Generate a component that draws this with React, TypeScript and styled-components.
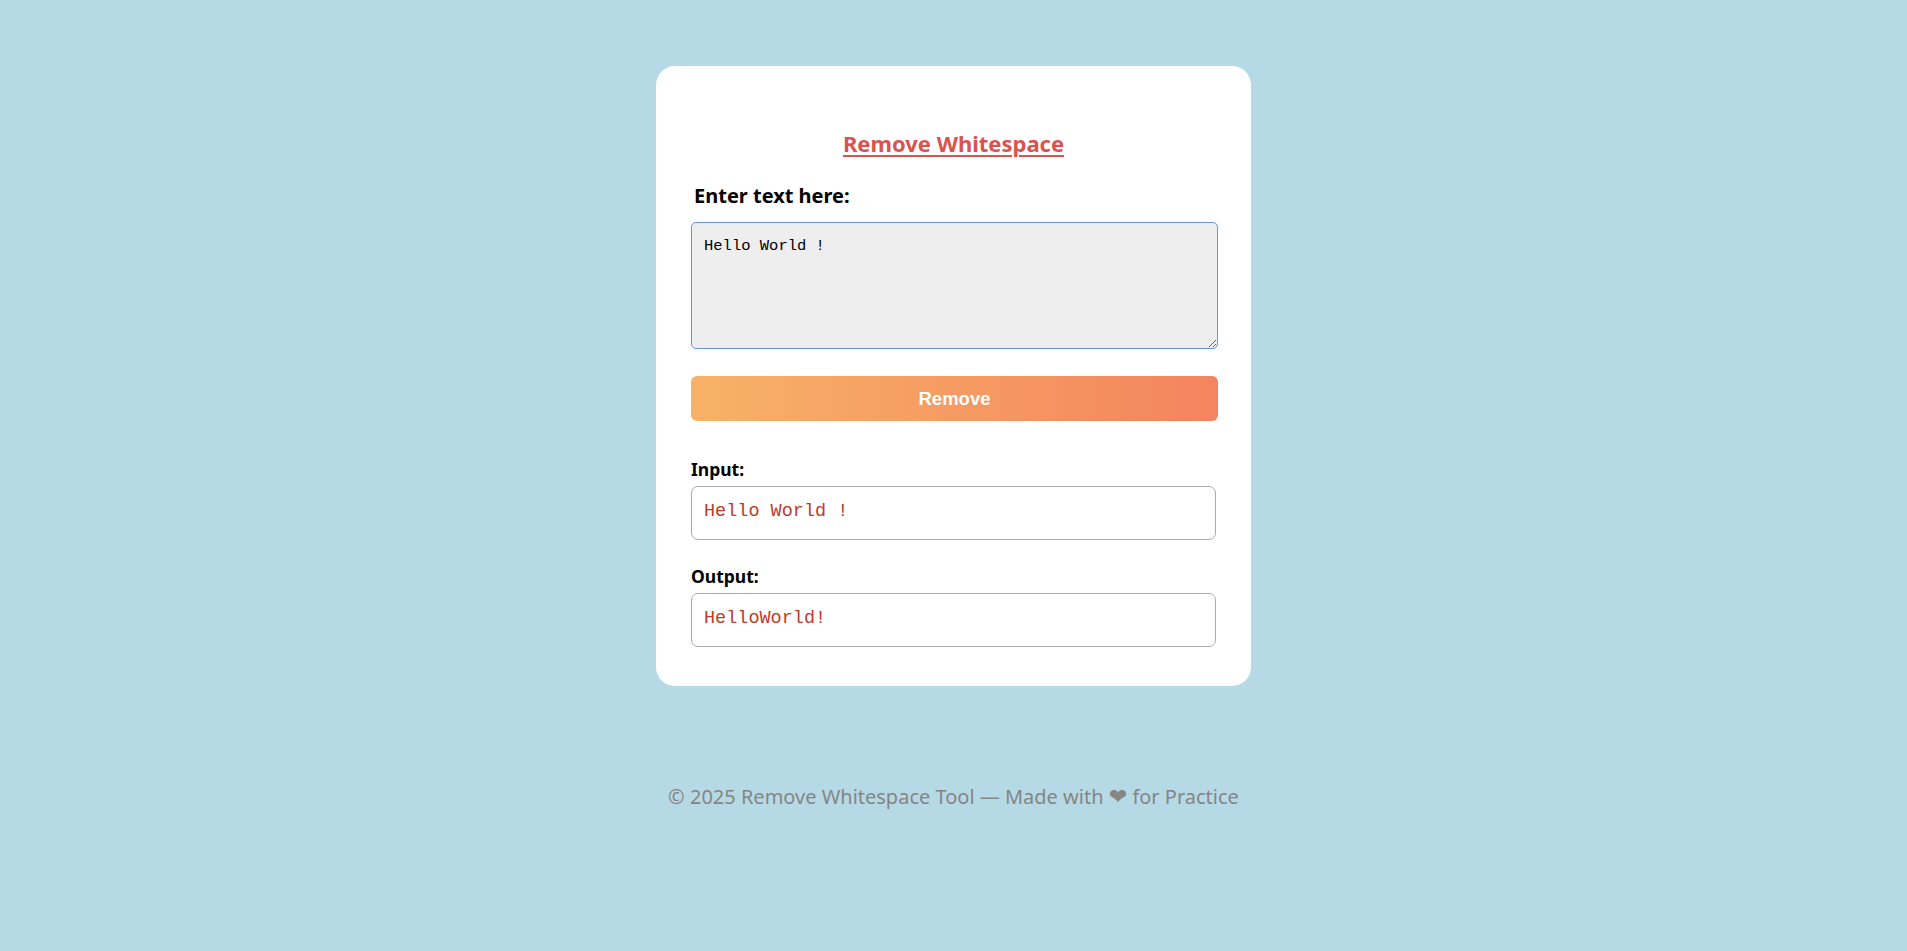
import { useState } from 'react';
import styled, { createGlobalStyle } from 'styled-components';

const GlobalStyle = createGlobalStyle`
  html, body {
    margin: 0;
    padding: 0;
    background: #b6dae5;
  }
  body {
    font-family: 'Noto Sans', 'Open Sans', sans-serif;
  }
`;

const Page = styled.div`
  min-height: 951px;
  padding-top: 66px;
  box-sizing: border-box;
`;

const Card = styled.main`
  width: 595px;
  margin: 0 auto;
  box-sizing: border-box;
  background: #fff;
  border-radius: 19px;
  padding: 62px 35px 39px;
`;

const Title = styled.h1`
  margin: 0 0 25px;
  text-align: center;
  font-size: 22px;
  line-height: 30px;
  font-weight: 700;
  color: #d9534f;
  text-decoration: underline;
  text-decoration-thickness: 2px;
  text-underline-offset: 3px;
`;

const Label = styled.label<{ $size?: number; $indent?: number }>`
  display: block;
  padding-left: ${({ $indent }) => $indent ?? 0}px;
  font-size: ${({ $size }) => $size ?? 17.5}px;
  line-height: ${({ $size }) => ($size ? $size + 5 : 22)}px;
  font-weight: 700;
  color: #000;
`;

const TextArea = styled.textarea`
  display: block;
  width: calc(100% + 2px);
  height: 127px;
  margin-top: 14px;
  box-sizing: border-box;
  padding: 14px 12px;
  border: 1px solid #6b95d8;
  border-radius: 5px;
  background: #eeeeee;
  font-family: 'Liberation Mono', monospace;
  font-size: 15.5px;
  line-height: 18px;
  color: #000;
  outline: none;
`;

const RemoveButton = styled.button`
  display: block;
  width: calc(100% + 2px);
  height: 45px;
  margin-top: 27px;
  border: none;
  border-radius: 6px;
  background: linear-gradient(90deg, #f7b267 0%, #f4845f 100%);
  color: #fff;
  font-family: 'Liberation Sans', Arial, sans-serif;
  font-size: 18.5px;
  font-weight: 700;
  cursor: pointer;
`;

const Results = styled.section`
  margin-top: 37px;
  display: flex;
  flex-direction: column;
  gap: 25px;
`;

const Field = styled.div`
  display: flex;
  flex-direction: column;
  gap: 6px;
`;

const ResultBox = styled.div`
  box-sizing: border-box;
  height: 54px;
  padding: 0 12px 4px;
  display: flex;
  align-items: center;
  border: 1px solid #aaaaaa;
  border-radius: 7px;
  font-family: 'Liberation Mono', monospace;
  font-size: 18.5px;
  color: #c0392b;
  white-space: pre;
`;

const Footer = styled.footer`
  margin-top: 98px;
  text-align: center;
  font-size: 20px;
  line-height: 26px;
  color: #858585;
`;

const Heart = styled.span`
  font-family: 'DejaVu Sans', sans-serif;
  font-size: 22px;
`;

export default function App() {
  const [text, setText] = useState('Hello World !');
  const [input, setInput] = useState('Hello World !');
  const output = input.replace(/\s+/g, '');

  return (
    <Page>
      <GlobalStyle />
      <Card>
        <Title>Remove Whitespace</Title>
        <Label htmlFor="text" $size={20} $indent={3}>
          Enter text here:
        </Label>
        <TextArea id="text" value={text} onChange={(e) => setText(e.target.value)} />
        <RemoveButton type="button" onClick={() => setInput(text)}>
          Remove
        </RemoveButton>
        <Results>
          <Field>
            <Label>Input:</Label>
            <ResultBox>{input}</ResultBox>
          </Field>
          <Field>
            <Label>Output:</Label>
            <ResultBox>{output}</ResultBox>
          </Field>
        </Results>
      </Card>
      <Footer>
        © 2025 Remove Whitespace Tool — Made with <Heart>❤</Heart> for Practice
      </Footer>
    </Page>
  );
}
